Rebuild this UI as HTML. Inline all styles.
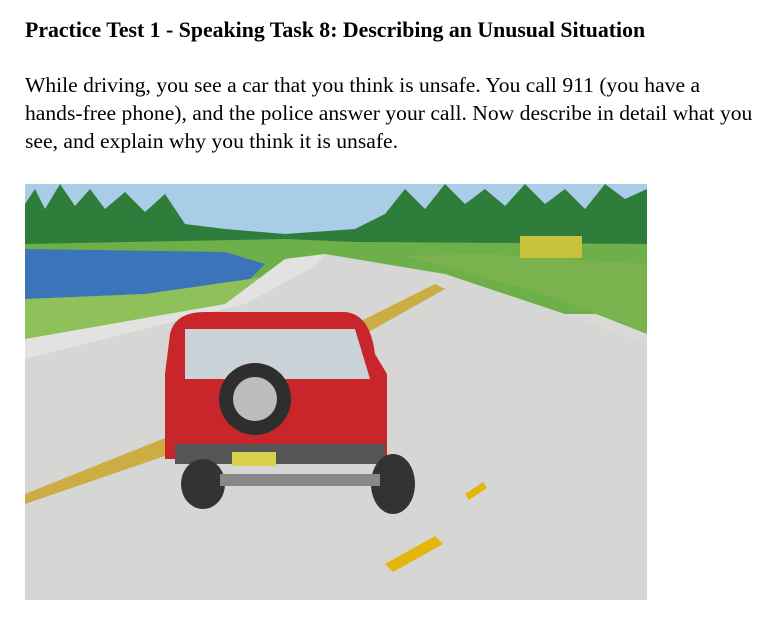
<!DOCTYPE html>
<html><head><meta charset="utf-8"><style>
body{margin:0;background:#fff;width:764px;height:630px;overflow:hidden;font-family:"Liberation Serif",serif;color:#000}
.t{position:absolute;left:25px;top:18px;font-weight:bold;font-size:21.8px;white-space:nowrap}
.p{position:absolute;left:25px;top:71px;font-size:21.6px;line-height:28px;white-space:nowrap}
svg{position:absolute;left:25px;top:184px}
</style></head><body>
<div class="t">Practice Test 1 - Speaking Task 8: Describing an Unusual Situation</div>
<div class="p">While driving, you see a car that you think is unsafe. You call 911 (you have a<br>hands-free phone), and the police answer your call. Now describe in detail what you<br>see, and explain why you think it is unsafe.</div>
<svg width="622" height="416" viewBox="0 0 622 416">
<rect width="622" height="416" fill="#d9d9d6"/>
<rect width="622" height="60" fill="#a9cde6"/>
<path d="M0 20 L10 5 L20 25 L35 0 L50 22 L65 5 L80 25 L100 8 L120 28 L140 10 L160 40 L200 45 L260 50 L330 45 L360 30 L380 5 L400 25 L420 0 L440 20 L460 5 L480 22 L500 0 L520 20 L540 5 L560 25 L580 0 L600 15 L622 5 L622 90 L0 90Z" fill="#2f7d3a"/>
<path d="M0 60 L260 55 L330 58 L622 60 L622 130 L0 130Z" fill="#6db04a"/>
<path d="M0 65 L200 68 L240 80 L220 100 L120 110 L0 115Z" fill="#3b74b8"/>
<path d="M0 115 L120 110 L260 90 L340 95 L330 120 L150 145 L0 165Z" fill="#8fc15a"/>
<path d="M0 175 L220 120 L270 80 L300 70 L420 90 L540 130 L622 160 L622 416 L0 416Z" fill="#d6d6d4"/>
<path d="M0 175 L220 120 L290 82 L300 70 L260 75 L200 120 L0 155Z" fill="#e2e2e0"/>
<path d="M0 310 L150 250 L330 140 L410 100 L420 105 L340 150 L160 265 L0 320Z" fill="#c9a21e" opacity=".8"/>
<path d="M380 72 L520 110 L622 150 L622 80 L460 70Z" fill="#7ab24e"/>
<rect x="495" y="52" width="62" height="22" fill="#c7c23a"/>
<path d="M360 380 L410 352 L418 360 L368 388Z" fill="#e5b50b"/>
<path d="M440 310 L458 298 L462 304 L444 316Z" fill="#e5b50b"/>
<path d="M145 150 Q150 128 180 128 L320 128 Q345 130 350 170 L362 190 L362 275 L140 275 L140 190Z" fill="#c8262a"/>
<path d="M160 145 L330 145 L345 195 L160 195Z" fill="#c9d3d8"/>
<circle cx="230" cy="215" r="36" fill="#2e2e2e"/>
<circle cx="230" cy="215" r="22" fill="#bdbdbd"/>
<rect x="150" y="260" width="210" height="20" fill="#555"/>
<rect x="207" y="268" width="44" height="14" fill="#d8cf4a"/>
<ellipse cx="178" cy="300" rx="22" ry="25" fill="#333"/>
<ellipse cx="368" cy="300" rx="22" ry="30" fill="#333"/>
<rect x="195" y="290" width="160" height="12" fill="#888"/>
</svg>
</body></html>
